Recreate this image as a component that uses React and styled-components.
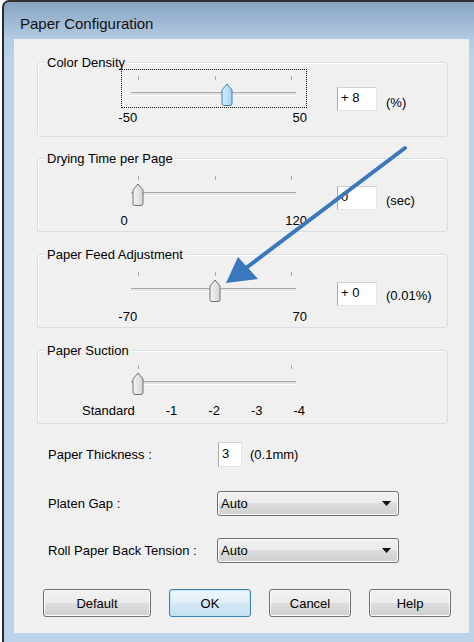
import React from 'react';
import styled, { createGlobalStyle } from 'styled-components';

const GlobalStyle = createGlobalStyle`
  html, body {
    margin: 0;
    padding: 0;
    background: #fff;
  }
  body {
    font-family: 'Liberation Sans', Arial, sans-serif;
    font-size: 13px;
    color: #000;
  }
`;

const Page = styled.div`
  position: relative;
  width: 474px;
  height: 642px;
  overflow: hidden;
`;

const Frame = styled.div`
  box-sizing: border-box;
  width: 472px;
  height: 642px;
  margin-left: 2px;
  display: flex;
  flex-direction: column;
  padding: 0 5px 9px 10px;
  border-top: 2px solid #303030;
  border-left: 2px solid #2a2a2a;
  border-top-left-radius: 7px;
  background: linear-gradient(#88a4c2 0, #b3cbe4 37px, #bcd3ea 60px, #bcd3ea 100%);
`;

const TitleBar = styled.div`
  height: 37px;
  box-sizing: border-box;
  display: flex;
  align-items: center;
  padding: 6px 0 0 6px;
  font-size: 15px;
  color: #111;
`;

const Content = styled.div`
  flex: 1;
  display: flex;
  flex-direction: column;
  padding-top: 23px;
  background: #f0f0f0;
`;

const Group = styled.div`
  position: relative;
  box-sizing: border-box;
  height: ${(p) => p.$height}px;
  margin: ${(p) => p.$mt || 0}px 21px 0 23px;
  border: 1px solid #d5dfe5;
  border-radius: 3px;
  box-shadow: inset 1px 1px 0 #fff;
`;

const GroupTitle = styled.span`
  position: absolute;
  top: -8px;
  left: 7px;
  padding: 0 2px;
  line-height: 15px;
  background: #f0f0f0;
`;

const SliderRow = styled.div`
  display: flex;
  align-items: flex-start;
  padding-left: 83px;
`;

const SliderCol = styled.div`
  width: 186px;
  margin-top: ${(p) => p.$mt}px;
`;

const SliderBox = styled.div`
  position: relative;
  box-sizing: border-box;
  height: 39px;
  border: 1px dotted ${(p) => (p.$focus ? '#111' : 'transparent')};
`;

const Ticks = styled.div`
  display: flex;
  justify-content: space-between;
  width: 154px;
  margin: 6px 0 0 16px;
`;

const Tick = styled.span`
  width: 1px;
  height: 4px;
  background: #a8a8a8;
`;

const Track = styled.div`
  box-sizing: border-box;
  width: 165px;
  height: 4px;
  margin: 12px 0 0 9px;
  border-top: 1px solid #a9a9a9;
  border-bottom: 1px solid #fdfdfd;
  background: #e2e4e4;
`;

const ThumbWrap = styled.svg`
  position: absolute;
  top: 13px;
  width: 12px;
  height: 23px;
`;

const LabelRow = styled.div`
  display: flex;
  margin: ${(p) => p.$mt}px 0 0 -4px;
  line-height: 15px;
`;

const EndLabel = styled.span`
  width: 24px;
  text-align: center;
`;

const FarLabel = styled.span`
  margin-left: 154px;
`;

const StepLabels = styled.div`
  display: flex;
  gap: 31px;
  margin: ${(p) => p.$mt}px 0 0 -39px;
  line-height: 15px;
`;

const TextBox = styled.div`
  box-sizing: border-box;
  width: ${(p) => p.$w || 40}px;
  height: ${(p) => p.$h || 24}px;
  margin: ${(p) => p.$mt || 0}px 0 0 ${(p) => p.$ml || 0}px;
  padding-left: 3px;
  line-height: ${(p) => (p.$h || 24) - 4}px;
  background: #fff;
  border: 1px solid #e3e4e8;
  border-left-color: #a9abb0;
  border-top-color: #cfd1d6;
`;

const Unit = styled.span`
  margin: ${(p) => p.$mt || 0}px 0 0 ${(p) => p.$ml || 9}px;
  line-height: 15px;
`;

const FormRow = styled.div`
  display: flex;
  align-items: center;
  height: 25px;
  margin-top: ${(p) => p.$mt}px;
  padding-left: 34px;
`;

const FieldLabel = styled.span`
  width: 169px;
`;

const Select = styled.div`
  box-sizing: border-box;
  display: flex;
  align-items: center;
  justify-content: space-between;
  width: 182px;
  height: 25px;
  padding: 0 7px 0 3px;
  border: 1px solid #707070;
  border-radius: 3px;
  background: linear-gradient(#f2f2f2 0, #ebebeb 50%, #dddddd 50%, #cfcfcf 100%);
  box-shadow: inset 0 0 0 1px #fbfbfb;
`;

const ButtonRow = styled.div`
  display: flex;
  gap: 18px;
  margin-top: 26px;
  padding-left: 29px;
`;

const Btn = styled.button`
  box-sizing: border-box;
  width: ${(p) => p.$w}px;
  height: 28px;
  padding: 0;
  font: inherit;
  color: #000;
  border: 1px solid ${(p) => (p.$primary ? '#3c7fb1' : '#707070')};
  border-radius: 3px;
  background: ${(p) => (p.$primary
    ? 'linear-gradient(#eef6fc 0, #e2eff9 50%, #d3e7f5 50%, #c8e0f1 100%)'
    : 'linear-gradient(#f2f2f2 0, #ebebeb 50%, #dddddd 50%, #cfcfcf 100%)')};
  box-shadow: inset 0 0 0 1px ${(p) => (p.$primary ? '#c3e5f8' : '#fcfcfc')};
`;

const Overlay = styled.svg`
  position: absolute;
  top: 0;
  left: 0;
  pointer-events: none;
`;

function Thumb({ left, focus }) {
  const id = focus ? 'thumbBlue' : 'thumbGray';
  return (
    <ThumbWrap viewBox="0 0 12 23" style={{ left }}>
      <defs>
        <linearGradient id={id} x1="0" y1="0" x2="1" y2="0">
          <stop offset="0" stopColor={focus ? '#d8effb' : '#f6f6f6'} />
          <stop offset="1" stopColor={focus ? '#9fd4f1' : '#d4d4d4'} />
        </linearGradient>
      </defs>
      <path
        d="M1 20.5 V7 L6 1 L11 7 V20.5 Q11 22.5 9 22.5 H3 Q1 22.5 1 20.5 Z"
        fill={`url(#${id})`}
        stroke={focus ? '#3b7cb0' : '#707070'}
        strokeLinejoin="round"
      />
    </ThumbWrap>
  );
}

function Slider({ min, max, value, focus, mt, labelMt, ticks = 3, children }) {
  const frac = (value - min) / (max - min);
  const center = 16 + frac * 153;
  return (
    <SliderCol $mt={mt}>
      <SliderBox $focus={focus}>
        <Ticks>
          {Array.from({ length: ticks }).map((_, i) => <Tick key={i} />)}
        </Ticks>
        <Track />
        <Thumb left={center - 6} focus={focus} />
      </SliderBox>
      {children || (
        <LabelRow $mt={labelMt}>
          <EndLabel>{min}</EndLabel>
          <FarLabel>{max}</FarLabel>
        </LabelRow>
      )}
    </SliderCol>
  );
}

function DropArrow() {
  return (
    <svg width="9" height="5" viewBox="0 0 9 5">
      <path d="M0 0 H9 L4.5 5 Z" fill="#111" />
    </svg>
  );
}

export default function App() {
  return (
    <Page>
      <GlobalStyle />
      <Frame>
        <TitleBar>Paper Configuration</TitleBar>
        <Content>
          <Group $height={75}>
            <GroupTitle>Color Density</GroupTitle>
            <SliderRow>
              <Slider min={-50} max={50} value={8} focus mt={6} labelMt={2} />
              <TextBox $mt={24} $ml={30}>+ 8</TextBox>
              <Unit $mt={32}>(%)</Unit>
            </SliderRow>
          </Group>

          <Group $height={74} $mt={21}>
            <GroupTitle>Drying Time per Page</GroupTitle>
            <SliderRow>
              <Slider min={0} max={120} value={0} mt={10} labelMt={5} />
              <TextBox $mt={27} $ml={30}>0</TextBox>
              <Unit $mt={34}>(sec)</Unit>
            </SliderRow>
          </Group>

          <Group $height={74} $mt={22}>
            <GroupTitle>Paper Feed Adjustment</GroupTitle>
            <SliderRow>
              <Slider min={-70} max={70} value={0} mt={10} labelMt={5} />
              <TextBox $mt={27} $ml={30}>+ 0</TextBox>
              <Unit $mt={33}>(0.01%)</Unit>
            </SliderRow>
          </Group>

          <Group $height={74} $mt={22}>
            <GroupTitle>Paper Suction</GroupTitle>
            <SliderRow>
              <Slider min={0} max={4} value={0} mt={7} ticks={2}>
                <StepLabels $mt={6}>
                  <span>Standard</span>
                  <span>-1</span>
                  <span>-2</span>
                  <span>-3</span>
                  <span>-4</span>
                </StepLabels>
              </Slider>
            </SliderRow>
          </Group>

          <FormRow $mt={18}>
            <FieldLabel>Paper Thickness :</FieldLabel>
            <TextBox $w={24} $h={25} $ml={1}>3</TextBox>
            <Unit $ml={8}>(0.1mm)</Unit>
          </FormRow>

          <FormRow $mt={24}>
            <FieldLabel>Platen Gap :</FieldLabel>
            <Select>
              <span>Auto</span>
              <DropArrow />
            </Select>
          </FormRow>

          <FormRow $mt={22}>
            <FieldLabel>Roll Paper Back Tension :</FieldLabel>
            <Select>
              <span>Auto</span>
              <DropArrow />
            </Select>
          </FormRow>

          <ButtonRow>
            <Btn $w={108}>Default</Btn>
            <Btn $w={82} $primary>OK</Btn>
            <Btn $w={82}>Cancel</Btn>
            <Btn $w={82}>Help</Btn>
          </ButtonRow>
        </Content>
      </Frame>

      <Overlay width="474" height="642" viewBox="0 0 474 642">
        <line x1="405" y1="148" x2="246" y2="268" stroke="#3a77bd" strokeWidth="4" strokeLinecap="round" />
        <polygon points="226,283 238,257 258,279" fill="#3a77bd" />
      </Overlay>
    </Page>
  );
}
